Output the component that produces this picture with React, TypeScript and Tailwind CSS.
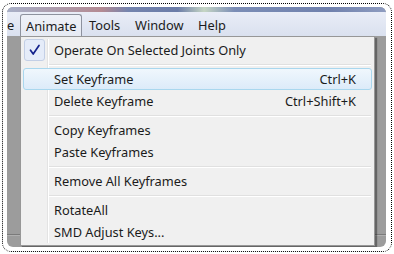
import React from "react";

const font = { fontFamily: '"Noto Sans", "Open Sans", Arial, sans-serif' };

function Row({ label, shortcut, active, checked }: { label: string; shortcut?: string; active?: boolean; checked?: boolean }) {
  return (
    <div
      className={
        "relative flex h-[22px] items-center rounded-[3px] border pt-[2px] " +
        (active
          ? "border-[#a9d7ee] bg-[linear-gradient(#f0f7fd,#dcebf9)]"
          : "border-transparent")
      }
    >
      <div className="flex w-[22px] shrink-0 items-center justify-center -mt-[2px]">
        {checked && (
          <div className="flex h-[22px] w-[21px] items-center justify-center rounded-[3px] border border-[#c3cfe6] bg-[#e5ecf9] -ml-[1px]">
            <svg width="14" height="14" viewBox="0 0 14 14">
              <path d="M2.5 7.2 L5.2 11 L11 2.5" fill="none" stroke="#15238c" strokeWidth="1.7" strokeLinecap="round" strokeLinejoin="round" />
            </svg>
          </div>
        )}
      </div>
      <span className="ml-[8px] text-[12.8px] text-[#1b1b1b]">{label}</span>
      {shortcut && <span className="ml-auto mr-[15px] text-[12.8px] text-[#1b1b1b]">{shortcut}</span>}
    </div>
  );
}

function Sep() {
  return (
    <div className="flex h-[7px] flex-col justify-center pl-[26px] pr-[1px]">
      <div className="h-px bg-[#e0e0e0]" />
      <div className="h-px bg-white" />
    </div>
  );
}

function GrayCol({ w }: { w: string }) {
  return (
    <div className={"flex flex-col " + w}>
      <div className="h-[198px]" />
      <div className="h-px bg-[#7a7a7a]" />
      <div className="h-px bg-[#b0b0b0]" />
    </div>
  );
}

export default function App() {
  return (
    <div className="h-[254px] w-[394px] bg-white pl-[2px] pt-[3px]" style={font}>
      <div className="h-[249px] w-[390px] rounded-[9px] border border-dotted border-black pl-[4px] pr-[3px] pt-[3px] pb-[3px]">
        <div className="flex h-[240px] w-[379px] flex-col overflow-hidden rounded-[6px] bg-[#9c9c9c]">
          {/* title strip */}
          <div className="h-[5px] bg-[linear-gradient(90deg,#a8b0c8_0%,#b48a92_25%,#7484ae_32%,#6b7ca8_45%,#c6d6c4_52%,#7b8db6_60%,#7081ad_85%,#8e9cc0_100%)]" />
          {/* menu bar */}
          <div className="flex h-[24px] items-start bg-[linear-gradient(#e9edf7,#dae1ef)] text-[12.8px] text-[#1b1b1b]">
            <div className="w-[13px] pt-[4px] leading-[18px]">e</div>
            <div className="mt-[2px] h-[22px] w-[62px] rounded-t-[3px] border border-b-0 border-[#8d929e] bg-[linear-gradient(#eef1f8,#e6eaf3)] pl-[5px] leading-[18px] pt-[2px]">
              Animate
            </div>
            <div className="w-[46px] pl-[7px] pt-[4px] leading-[18px]">Tools</div>
            <div className="w-[63px] pl-[7px] pt-[4px] leading-[18px]">Window</div>
            <div className="pl-[7px] pt-[4px] leading-[18px]">Help</div>
          </div>
          {/* body */}
          <div className="flex flex-1">
            <GrayCol w="w-[13px]" />
            <div className="relative h-[210px] w-[355px] border border-[#979797] bg-[#f0f0f0] p-[2px] shadow-[2px_2px_1px_rgba(0,0,0,0.35)]">
              <div className="pointer-events-none absolute bottom-[2px] left-[26px] top-[2px] w-px bg-[#e3e3e3]" />
              <div className="pointer-events-none absolute bottom-[2px] left-[27px] top-[2px] w-px bg-white" />
              <Row label="Operate On Selected Joints Only" checked />
              <Sep />
              <Row label="Set Keyframe" shortcut="Ctrl+K" active />
              <Row label="Delete Keyframe" shortcut="Ctrl+Shift+K" />
              <Sep />
              <Row label="Copy Keyframes" />
              <Row label="Paste Keyframes" />
              <Sep />
              <Row label="Remove All Keyframes" />
              <Sep />
              <Row label="RotateAll" />
              <Row label="SMD Adjust Keys..." />
            </div>
            <GrayCol w="w-[11px]" />
          </div>
        </div>
      </div>
    </div>
  );
}
